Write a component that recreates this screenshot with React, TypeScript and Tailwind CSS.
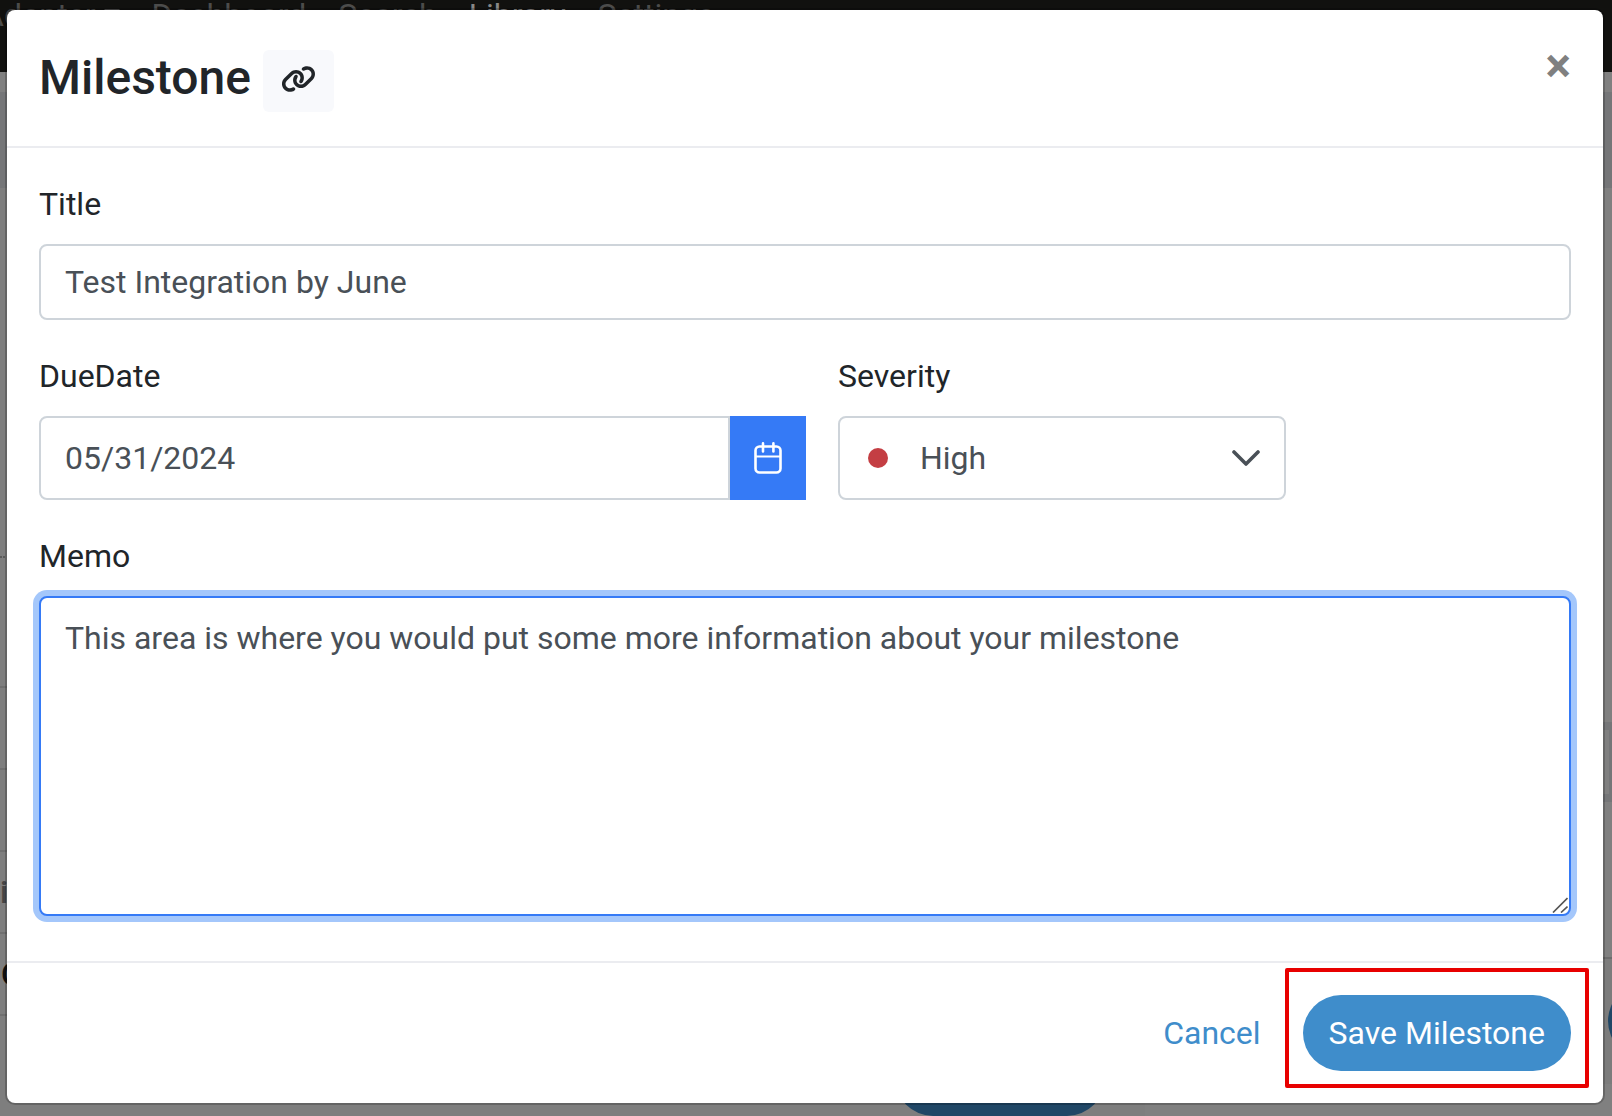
import { useState } from 'react'
import { FaLink } from 'react-icons/fa6'

const NAV_ITEMS = [
  { label: 'Dashboard', active: false },
  { label: 'Search', active: false },
  { label: 'Library', active: true },
  { label: 'Settings', active: false },
]

function CalendarIcon() {
  return (
    <svg
      width="28"
      height="32"
      viewBox="0 0 28 32"
      fill="none"
      stroke="currentColor"
      strokeLinecap="round"
      aria-hidden="true"
    >
      <rect x="1.5" y="4.5" width="25" height="26" rx="4" strokeWidth="2.6" />
      <path d="M2 14.5h24" strokeWidth="2" />
      <path d="M9 1.4v8M19.4 1.4v8" strokeWidth="2.6" />
    </svg>
  )
}

function ChevronIcon() {
  return (
    <svg
      width="28"
      height="16"
      viewBox="0 0 28 16"
      fill="none"
      stroke="currentColor"
      strokeWidth="3.6"
      strokeLinecap="round"
      strokeLinejoin="round"
      aria-hidden="true"
    >
      <path d="M2 2l12 12L26 2" />
    </svg>
  )
}

// Dimmed page that sits behind the dialog
function Backdrop() {
  return (
    <div
      aria-hidden="true"
      className="absolute inset-0 flex flex-col overflow-hidden bg-[#808080] text-[32px]"
    >
      <div className="-ml-[17px] flex h-18 shrink-0 items-start gap-8 bg-[#11110f] leading-[30px] text-[#4c4c4b]">
        <div className="flex items-start gap-2">
          <span>Adapter</span>
          <svg width="16" height="30" viewBox="0 0 16 30" fill="currentColor">
            <path d="M0 9h16l-8 8z" />
          </svg>
        </div>
        {NAV_ITEMS.map((item) => (
          <span key={item.label} className={item.active ? 'text-[#888887]' : ''}>
            {item.label}
          </span>
        ))}
      </div>
      <div className="mt-5 h-24 shrink-0 bg-[#757678]" />

      <div className="flex flex-1">
        <div className="flex flex-1 flex-col bg-[#7e7e7e]">
          <div className="h-92" />
          <div className="h-[130px] border-t-2 border-dotted border-[#5a5a5a]" />
          <div className="h-[82px] border-t-2 border-[#707070]" />
          <div className="h-[82px] border-t-2 border-[#707070]" />
          <div className="h-[82px] border-t-2 border-[#707070] pt-4 leading-12 font-medium text-[#454545]">i</div>
          <div className="h-[82px] border-t-2 border-[#707070] pt-4 pl-px leading-12 font-medium text-[#101010]">C</div>
          <div className="flex flex-1 justify-end border-t-2 border-[#707070] pt-6 pr-10">
            <div className="h-19 w-[210px] rounded-full bg-[#204766]" />
          </div>
        </div>
        <div className="flex w-[467px] flex-col">
          <div className="mt-[534px] h-20 border-y-8 border-r-[3px] border-[#757678]" />
          <div className="mt-[155px] flex h-[127px] justify-end border-t-2 border-[#6c6c6c] bg-[#7c7c7c] pt-6">
            <div className="-mr-18 size-19 rounded-full bg-[#204766]" />
          </div>
        </div>
      </div>
    </div>
  )
}

export default function App() {
  const [title, setTitle] = useState('Test Integration by June')
  const [dueDate, setDueDate] = useState('05/31/2024')
  const [severity, setSeverity] = useState('High')
  const [memo, setMemo] = useState(
    'This area is where you would put some more information about your milestone',
  )

  return (
    <div className="relative min-h-screen pt-[10px] pr-[9px] pb-[13px] pl-[7px] font-[Roboto,sans-serif] text-[32px] leading-12 text-[#212529]">
      <Backdrop />

      <div
        role="dialog"
        aria-modal="true"
        aria-labelledby="dialog-title"
        className="relative rounded-lg bg-white ring-2 ring-black/20"
      >
        <header className="flex items-start border-b-2 border-[#ebecf0] p-8">
          <h1 id="dialog-title" className="text-[48px] leading-18 font-medium">
            Milestone
          </h1>
          <button
            type="button"
            aria-label="Copy link"
            className="mt-2 ml-3 flex h-[62px] w-[71px] items-center justify-center rounded-md bg-[#f8f9fc] pb-1"
          >
            <FaLink className="h-7 w-[35px]" />
          </button>
          <button
            type="button"
            aria-label="Close"
            className="ml-auto text-[48px] leading-12 font-bold text-[#808080]"
          >
            ×
          </button>
        </header>

        <form id="milestone-form" className="px-8 pt-8 pb-[45px]" onSubmit={(e) => e.preventDefault()}>
          {/* Title */}
          <div className="mb-8">
            <label htmlFor="title" className="mb-4 block">
              Title
            </label>
            <input
              id="title"
              type="text"
              value={title}
              onChange={(e) => setTitle(e.target.value)}
              className="block h-19 w-full rounded-lg border-2 border-[#ced4da] bg-white px-6 text-[#495057] outline-none"
            />
          </div>

          <div className="mb-8 flex gap-8">
            {/* Due date */}
            <div className="w-[calc(50%+1px)] shrink-0">
              <label htmlFor="due-date" className="mb-4 block">
                DueDate
              </label>
              <div className="flex">
                <input
                  id="due-date"
                  type="text"
                  value={dueDate}
                  onChange={(e) => setDueDate(e.target.value)}
                  className="h-21 min-w-0 flex-1 rounded-l-lg border-2 border-[#ced4da] bg-white px-6 text-[#495057] outline-none"
                />
                <button
                  type="button"
                  aria-label="Pick a date"
                  className="flex h-21 w-19 items-center justify-center bg-[#357af6] text-white"
                >
                  <CalendarIcon />
                </button>
              </div>
            </div>

            {/* Severity */}
            <div className="w-112">
              <label htmlFor="severity" className="mb-4 block">
                Severity
              </label>
              <div className="relative text-[#495057]">
                <select
                  id="severity"
                  value={severity}
                  onChange={(e) => setSeverity(e.target.value)}
                  className="block h-21 w-full appearance-none rounded-lg border-2 border-[#ced4da] bg-white pr-16 pl-20 outline-none"
                >
                  <option>High</option>
                  <option>Medium</option>
                  <option>Low</option>
                </select>
                <span className="pointer-events-none absolute inset-y-0 left-[30px] flex items-center">
                  <span className="size-5 rounded-full bg-[#c43e43]" />
                </span>
                <span className="pointer-events-none absolute inset-y-0 right-[26px] flex items-center">
                  <ChevronIcon />
                </span>
              </div>
            </div>
          </div>

          {/* Memo */}
          <div>
            <label htmlFor="memo" className="mb-4 block">
              Memo
            </label>
            <div className="relative">
              <textarea
                id="memo"
                value={memo}
                onChange={(e) => setMemo(e.target.value)}
                className="block h-80 w-full resize-none rounded-lg border-2 border-[#357af6] bg-white px-6 py-4 text-[#495057] ring-6 ring-[#a4c7fb] outline-none"
              />
              <svg
                width="16"
                height="16"
                viewBox="0 0 16 16"
                fill="none"
                stroke="#555"
                strokeWidth="1.7"
                className="pointer-events-none absolute right-[3px] bottom-[3px]"
                aria-hidden="true"
              >
                <path d="M1 15.5L15.5 1M9 15.5L15.5 9.5" />
              </svg>
            </div>
          </div>
        </form>

        <footer className="flex justify-end gap-4 border-t-2 border-[#ebecf0] p-8">
          <button type="button" className="h-19 px-[26px] text-[#3f8dcb]">
            Cancel
          </button>
          <div className="relative">
            <button
              type="submit"
              form="milestone-form"
              className="h-19 rounded-full bg-[#3f8dcb] px-[26px] text-white"
            >
              Save Milestone
            </button>
            <div className="pointer-events-none absolute -inset-x-[18px] -top-[27px] -bottom-[17px] rounded-xs border-4 border-[#e80000]" />
          </div>
        </footer>
      </div>
    </div>
  )
}
